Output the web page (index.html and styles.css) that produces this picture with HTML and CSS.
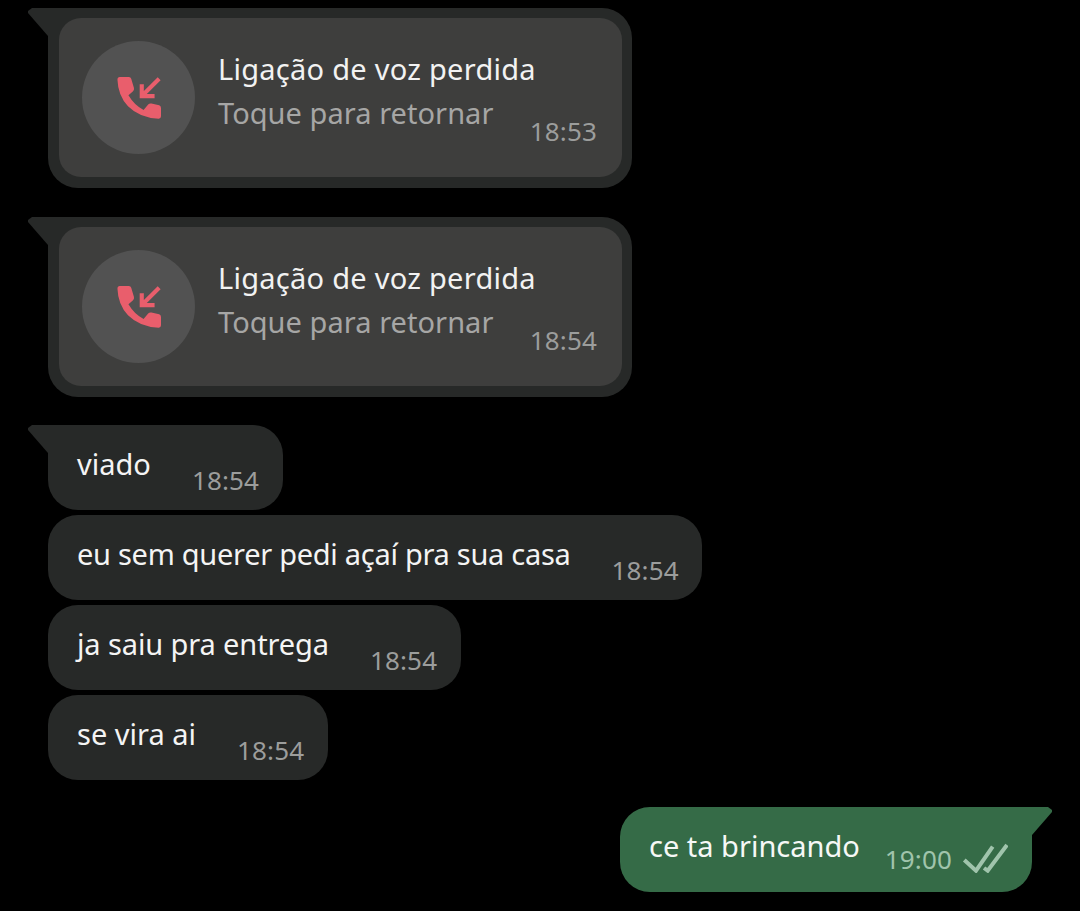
FILE: index.html
```html
<!DOCTYPE html>
<html lang="pt">
<head>
<meta charset="utf-8">
<title>Conversa</title>
<link rel="stylesheet" href="styles.css">
</head>
<body>
<main class="chat">
  <div class="bubble in tail call">
    <div class="card">
      <div class="avatar">
        <svg class="phone" viewBox="0 0 48 48"><path class="ph" d="M3 1 H13 Q15 1 15.500 3 L18.500 13 Q19 15 17.500 16.500 L12.500 21 Q19 32 29 37 L34 31 Q35.500 29.500 37.500 30 L46 32 Q48 32.500 48 35 V44 Q48 46.500 45.500 46.500 Q25 46 12 33 Q1 21 0.500 4 Q0.500 1 3 1 Z"/><path class="ar" d="M46 3 L29 20 M27 9 V22 H41"/></svg>
      </div>
      <div class="info">
        <div class="title">Ligação de voz perdida</div>
        <div class="sub">Toque para retornar</div>
      </div>
      <time class="time card-time">18:53</time>
    </div>
  </div>
  <div class="bubble in tail call second">
    <div class="card">
      <div class="avatar">
        <svg class="phone" viewBox="0 0 48 48"><path class="ph" d="M3 1 H13 Q15 1 15.500 3 L18.500 13 Q19 15 17.500 16.500 L12.500 21 Q19 32 29 37 L34 31 Q35.500 29.500 37.500 30 L46 32 Q48 32.500 48 35 V44 Q48 46.500 45.500 46.500 Q25 46 12 33 Q1 21 0.500 4 Q0.500 1 3 1 Z"/><path class="ar" d="M46 3 L29 20 M27 9 V22 H41"/></svg>
      </div>
      <div class="info">
        <div class="title">Ligação de voz perdida</div>
        <div class="sub">Toque para retornar</div>
      </div>
      <time class="time card-time">18:54</time>
    </div>
  </div>
  <div class="group">
    <div class="bubble in tail text"><span class="msg">viado</span><time class="time">18:54</time></div>
    <div class="bubble in text"><span class="msg long">eu sem querer pedi açaí pra sua casa</span><time class="time">18:54</time></div>
    <div class="bubble in text"><span class="msg mid">ja saiu pra entrega</span><time class="time">18:54</time></div>
    <div class="bubble in text"><span class="msg">se vira ai</span><time class="time">18:54</time></div>
  </div>
  <div class="bubble out tail text">
    <span class="msg">ce ta brincando</span>
    <time class="time">19:00</time>
    <svg class="ticks" viewBox="0 0 46 30"><path d="M2.300 17 L14 27.700 L30.700 3.700 M22 25 L25.700 27.700 L45 2"/></svg>
  </div>
</main>
</body>
</html>
```
FILE: styles.css
```css
* { box-sizing: border-box; }
html, body { margin: 0; height: 911px; overflow: hidden; background: #000; }
body { font-family: "Noto Sans", "Open Sans", sans-serif; color: #f4f4f4; }
.chat { display: flex; flex-direction: column; align-items: flex-start; padding: 8px 48px 0 48px; }
.bubble { position: relative; background: #272928; border-radius: 30px; }
.tail.in { border-top-left-radius: 0; }
.tail.in::before { content: ""; position: absolute; left: -20px; top: 0; width: 21px; height: 28px; background: inherit; clip-path: polygon(4px 0, 21px 0, 21px 28px, 20px 28px, 0 5px, 0 3px); }
.call { width: 584px; height: 180px; padding: 10px; }
.second { margin-top: 29px; }
.card { display: flex; align-items: flex-start; width: 563px; height: 159px; margin-left: 1px; padding: 23px 25px 0 23px; background: #3e3e3d; border-radius: 22px; }
.avatar { flex: none; display: flex; align-items: center; justify-content: center; width: 113px; height: 113px; border-radius: 50%; background: #525252; }
.phone { width: 44px; height: 44px; }
.ph { fill: #e95e6c; }
.ar { fill: none; stroke: #e95e6c; stroke-width: 4.500; }
.info { flex: 1; min-width: 0; margin-left: 23px; padding-top: 6px; white-space: nowrap; }
.title { font-size: 29px; line-height: 44px; letter-spacing: .27px; color: #f2f2f2; }
.sub { font-size: 29px; line-height: 43px; letter-spacing: .05px; color: #a6a6a5; }
.time { flex: none; font-size: 26px; line-height: 34px; letter-spacing: .15px; color: #9c9d9c; white-space: nowrap; }
.card-time { margin-top: 73px; }
.group { display: flex; flex-direction: column; align-items: flex-start; gap: 5px; margin-top: 28px; }
.text { display: flex; height: 85px; padding: 0 23.500px 0 29px; }
.msg { font-size: 29px; line-height: 42px; margin-top: 18px; white-space: nowrap; }
.long { letter-spacing: -.28px; }
.mid { letter-spacing: -.11px; }
.text .time { margin-left: 41px; margin-top: 38px; }
.out { align-self: flex-end; width: 412px; margin-top: 27px; background: #356b47; padding-right: 0; }
.out .msg { color: #f6f8f6; }
.text.out .time { color: #a0c4ac; margin-left: 25px; margin-top: 35px; }
.tail.out { border-top-right-radius: 0; }
.tail.out::before { content: ""; position: absolute; right: -20px; top: 0; width: 21px; height: 28px; background: inherit; clip-path: polygon(0 0, 17px 0, 21px 3px, 21px 5px, 1px 28px, 0 28px); }
.ticks { flex: none; width: 46px; height: 30px; margin: 36px 0 0 10px; fill: none; stroke: #a0c4ac; stroke-width: 4; }
```
